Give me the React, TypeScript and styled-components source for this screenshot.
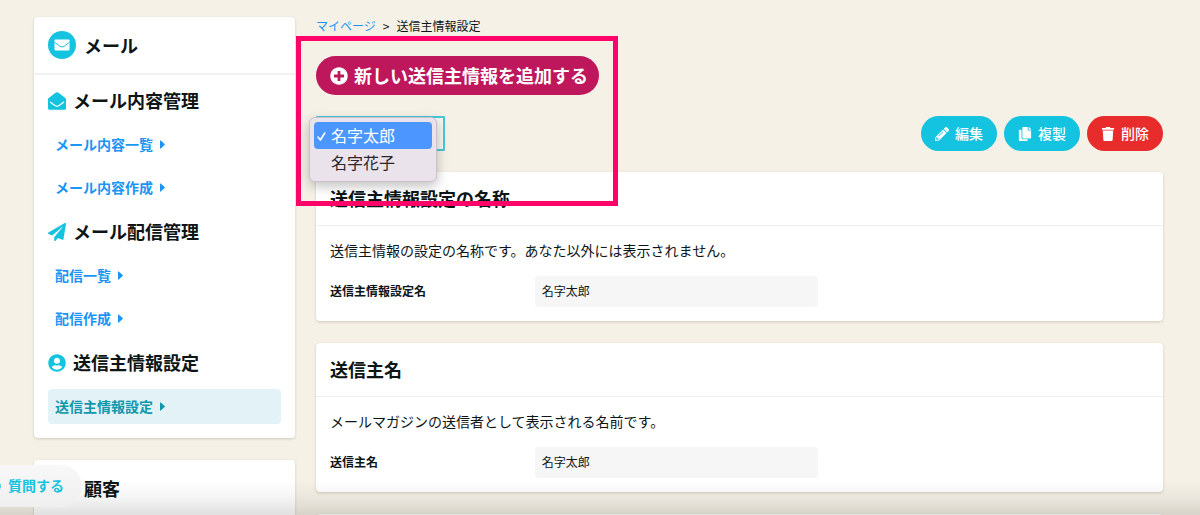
import React, { useId } from 'react';
import styled, { createGlobalStyle } from 'styled-components';
import {
  FaCopy,
  FaPaperPlane,
  FaPencilAlt,
  FaPlusCircle,
  FaQuestionCircle,
  FaTrash,
  FaUser,
  FaUserCircle,
} from 'react-icons/fa';

const color = {
  page: '#f5f1e7',
  text: '#0d1517',
  cyan: '#14c3df',
  link: '#1b95f3',
  red: '#e82c2c',
  magenta: '#bf175c',
  line: '#eceef0',
};

/* Labels carry 2px of bottom padding because the font sits low in its line; icons beside them are set back to the true middle. */
const GlobalStyle = createGlobalStyle`
  *, *::before, *::after { box-sizing: border-box; }
  html { background: ${color.page}; }
  body {
    margin: 0;
    height: 100vh;
    overflow: hidden;
    color: ${color.text};
    font-family: "Noto Sans CJK JP", "Noto Sans", sans-serif;
    font-size: 14px;
    line-height: 20px;
  }
  button, input, select { font: inherit; color: inherit; }
  h1, h2, h3, p, ul, ol { margin: 0; padding: 0; list-style: none; }
  a { color: ${color.link}; text-decoration: none; }
  svg { flex: none; }
  button > svg, a > svg, h3 > svg { margin-top: 2px; }
`;

const Page = styled.div`
  display: grid;
  grid-template-columns: 261px minmax(0, 1fr);
  gap: 21px;
  align-items: start;
  padding: 17px 37px 17px 34px;
`;

const Stack = styled.div`
  display: flex;
  flex-direction: column;
  gap: 22px;
`;

const Card = styled.section`
  background: #fff;
  border-radius: 4px;
  box-shadow: 0 1px 3px rgba(60, 50, 20, 0.2);
`;

const MenuHeader = styled.header`
  display: flex;
  align-items: center;
  gap: 8px;
  padding: 14px;
  border-bottom: 2px solid #f1f1f2;
`;

const Badge = styled.span`
  display: grid;
  place-items: center;
  width: 28px;
  height: 28px;
  border-radius: 50%;
  background: ${color.cyan};
  color: #fff;
`;

const MenuTitle = styled.h2`
  font-size: 18px;
  font-weight: 700;
  line-height: 28px;
`;

const MenuBody = styled.nav`
  display: flex;
  flex-direction: column;
  gap: 8px;
  padding: 7px 14px 14px;
`;

const GroupTitle = styled.h3`
  display: flex;
  align-items: center;
  gap: 7px;
  height: 37px;
  padding-bottom: 2px;
  font-size: 18px;
  font-weight: 700;

  svg { color: ${color.cyan}; }
`;

const MenuLink = styled.a<{ $active?: boolean }>`
  display: flex;
  align-items: center;
  gap: 7px;
  height: 35px;
  padding: 0 7px 2px;
  border-radius: 4px;
  font-weight: 700;
  color: ${(p) => (p.$active ? '#0f98ad' : color.link)};
  background: ${(p) => (p.$active ? '#e3f2f7' : 'transparent')};
`;

const Main = styled.main`
  position: relative;
  display: flex;
  flex-direction: column;
  align-items: flex-start;
  gap: 21px;
`;

const Breadcrumb = styled.ol`
  display: flex;
  gap: 7px;
  font-size: 12px;
  line-height: 18px;
`;

const AddButton = styled.button`
  display: flex;
  align-items: center;
  gap: 6px;
  height: 39px;
  padding: 0 11px 2px 14px;
  border: 0;
  border-radius: 20px;
  background: ${color.magenta};
  color: #fff;
  font-size: 18px;
  font-weight: 700;
`;

const Toolbar = styled.div`
  display: flex;
  justify-content: space-between;
  width: 100%;
`;

const Picker = styled.div`
  position: relative;
`;

const PickerSelect = styled.select`
  width: 129px;
  height: 35px;
  padding: 0 12px;
  border: 2px solid #45c8dc;
  border-radius: 1px;
  outline: 0;
  background: #f7f5f0;
  appearance: none;
  font-size: 16px;
`;

const Options = styled.ul`
  position: absolute;
  z-index: 1;
  top: 1px;
  left: -7px;
  width: 128px;
  padding: 4px 4px 5px;
  border: 1px solid #c9c2c9;
  border-radius: 6px;
  background: #eae3eb;
  box-shadow: 0 4px 12px rgba(0, 0, 0, 0.25);
`;

const Option = styled.li<{ $selected?: boolean }>`
  display: grid;
  grid-template-columns: 10px 1fr;
  align-items: center;
  gap: 4px;
  height: 27px;
  padding: 0 3px 2px;
  border-radius: 4px;
  font-size: 16px;
  color: ${(p) => (p.$selected ? '#fff' : '#2b272c')};
  background: ${(p) => (p.$selected ? '#4b96ff' : 'transparent')};
`;

const OptionMark = styled.span`
  display: flex;
  padding-top: 4px;
`;

const Actions = styled.div`
  display: flex;
  gap: 7px;
`;

const ActionButton = styled.button<{ $danger?: boolean }>`
  display: flex;
  align-items: center;
  gap: 6px;
  height: 35px;
  padding: 0 14px 2px;
  border: 0;
  border-radius: 18px;
  background: ${(p) => (p.$danger ? color.red : color.cyan)};
  color: #fff;
  font-weight: 500;
`;

const Sections = styled(Stack)`
  width: 100%;
`;

const SectionTitle = styled.h2`
  padding: 13px 14px;
  border-bottom: 1px solid ${color.line};
  font-size: 18px;
  font-weight: 700;
  line-height: 27px;
`;

const SectionBody = styled.div`
  display: flex;
  flex-direction: column;
  gap: 16px;
  padding: 14px;
`;

const Field = styled.div`
  display: flex;
  align-items: center;
  font-size: 12px;
`;

const FieldLabel = styled.label`
  flex: 0 0 25%;
  padding-bottom: 2px;
  font-weight: 700;
`;

const FieldValue = styled.input`
  width: 283px;
  height: 31px;
  padding: 0 7px 2px;
  border: 0;
  border-radius: 4px;
  outline: 0;
  background: #f6f6f6;
`;

const Highlight = styled.div`
  position: absolute;
  z-index: 2;
  top: 19px;
  left: -20px;
  width: 322px;
  height: 170px;
  border: 5px solid #ff0468;
  pointer-events: none;
`;

const AskButton = styled.button`
  position: fixed;
  z-index: 4;
  left: -27px;
  bottom: 8px;
  display: flex;
  align-items: center;
  gap: 7px;
  height: 42px;
  padding: 0 18px 2px 14px;
  border: 0;
  border-radius: 21px;
  background: linear-gradient(#f8f8f8, #efefef);
  color: ${color.cyan};
  font-weight: 700;
`;

const BottomShade = styled.div`
  position: fixed;
  z-index: 3;
  right: 0;
  bottom: 0;
  left: 0;
  height: 36px;
  background: linear-gradient(rgba(0, 0, 0, 0), rgba(0, 0, 0, 0.04) 50%, rgba(0, 0, 0, 0.12));
  pointer-events: none;
`;

function MailIcon() {
  return (
    <svg width="16" height="12" viewBox="0 0 16 12" aria-hidden="true">
      <rect x="0.5" y="0.5" width="15" height="11" rx="1" fill="currentColor" />
      <path d="M0.5 3.2 5.8 7.2Q8 8.8 10.2 7.2L15.5 3.2" fill="none" stroke={color.cyan} strokeWidth="1" />
    </svg>
  );
}

function OpenMailIcon() {
  return (
    <svg width="18" height="18" viewBox="0 0 18 18" aria-hidden="true">
      <path
        d="M0 7.2Q0 6.4.7 5.9L7.2 1Q9-.3 10.8 1L17.3 5.9Q18 6.4 18 7.2V16.2Q18 17.7 16.5 17.7H1.5Q0 17.7 0 16.2Z"
        fill="currentColor"
      />
      <path d="M2.4 10.2 6.9 13.6Q9 15 11.1 13.6L15.6 10.2" fill="none" stroke="#fff" strokeWidth="1.2" strokeLinecap="round" />
    </svg>
  );
}

function CaretIcon() {
  return (
    <svg width="5" height="9" viewBox="0 0 5 9" aria-hidden="true">
      <path d="M0 1Q0 0 .8.6L4.6 4Q5 4.5 4.6 5L.8 8.4Q0 9 0 8Z" fill="currentColor" />
    </svg>
  );
}

function CheckIcon() {
  return (
    <svg width="9" height="9" viewBox="0 0 9 9" aria-hidden="true">
      <path d="M1 5 3.4 8 7.8 1" fill="none" stroke="currentColor" strokeWidth="1.6" strokeLinecap="round" strokeLinejoin="round" />
    </svg>
  );
}

const groups = [
  { title: 'メール内容管理', Icon: OpenMailIcon, links: ['メール内容一覧', 'メール内容作成'] },
  { title: 'メール配信管理', Icon: FaPaperPlane, links: ['配信一覧', '配信作成'] },
  { title: '送信主情報設定', Icon: FaUserCircle, links: ['送信主情報設定'] },
];

const names = ['名字太郎', '名字花子'];

function InfoSection(props: { title: string; description: string; label: string; value: string }) {
  const id = useId();
  return (
    <Card>
      <SectionTitle>{props.title}</SectionTitle>
      <SectionBody>
        <p>{props.description}</p>
        <Field>
          <FieldLabel htmlFor={id}>{props.label}</FieldLabel>
          <FieldValue id={id} value={props.value} readOnly />
        </Field>
      </SectionBody>
    </Card>
  );
}

export default function App() {
  return (
    <>
      <GlobalStyle />
      <Page>
        <Stack>
          <Card>
            <MenuHeader>
              <Badge><MailIcon /></Badge>
              <MenuTitle>メール</MenuTitle>
            </MenuHeader>
            <MenuBody>
              {groups.map(({ title, Icon, links }) => (
                <React.Fragment key={title}>
                  <GroupTitle><Icon />{title}</GroupTitle>
                  {links.map((link) => (
                    <MenuLink key={link} href="#" $active={link === '送信主情報設定'}>
                      {link}
                      <CaretIcon />
                    </MenuLink>
                  ))}
                </React.Fragment>
              ))}
            </MenuBody>
          </Card>
          <Card>
            <MenuHeader>
              <Badge><FaUser /></Badge>
              <MenuTitle>顧客</MenuTitle>
            </MenuHeader>
          </Card>
        </Stack>

        <Main>
          <Breadcrumb>
            <li><a href="#">マイページ</a></li>
            <li aria-hidden="true">&gt;</li>
            <li>送信主情報設定</li>
          </Breadcrumb>
          <AddButton type="button"><FaPlusCircle />新しい送信主情報を追加する</AddButton>
          <Toolbar>
            <Picker>
              <PickerSelect aria-label="送信主情報" defaultValue={names[0]}>
                {names.map((name) => <option key={name}>{name}</option>)}
              </PickerSelect>
              <Options role="listbox" aria-label="送信主情報">
                {names.map((name, i) => (
                  <Option key={name} role="option" aria-selected={i === 0} $selected={i === 0}>
                    <OptionMark>{i === 0 && <CheckIcon />}</OptionMark>
                    {name}
                  </Option>
                ))}
              </Options>
            </Picker>
            <Actions>
              <ActionButton type="button"><FaPencilAlt />編集</ActionButton>
              <ActionButton type="button"><FaCopy />複製</ActionButton>
              <ActionButton type="button" $danger><FaTrash />削除</ActionButton>
            </Actions>
          </Toolbar>
          <Sections>
            <InfoSection
              title="送信主情報設定の名称"
              description="送信主情報の設定の名称です。あなた以外には表示されません。"
              label="送信主情報設定名"
              value="名字太郎"
            />
            <InfoSection
              title="送信主名"
              description="メールマガジンの送信者として表示される名前です。"
              label="送信主名"
              value="名字太郎"
            />
            <Card><SectionBody /></Card>
          </Sections>
          <Highlight />
        </Main>
      </Page>
      <BottomShade />
      <AskButton type="button"><FaQuestionCircle />質問する</AskButton>
    </>
  );
}
